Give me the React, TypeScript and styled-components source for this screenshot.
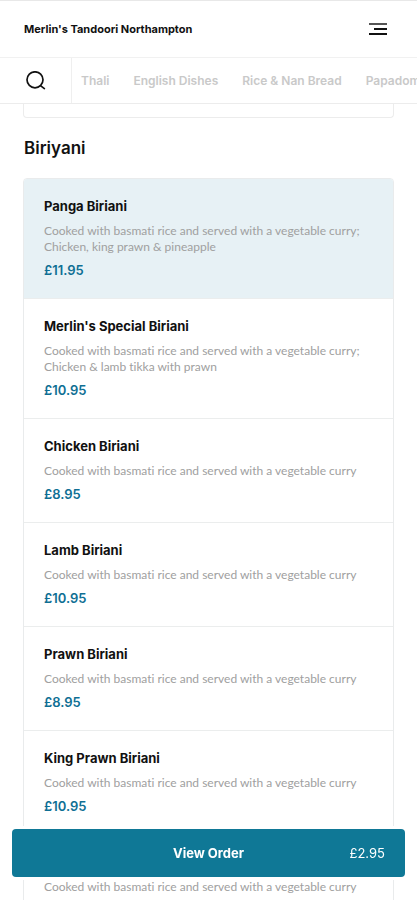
import React from "react";
import styled, { createGlobalStyle } from "styled-components";

const GlobalStyle = createGlobalStyle`
  *, *::before, *::after { box-sizing: border-box; }
  body {
    margin: 0;
    background: #fff;
    color: #111;
    font-family: Inter, "Open Sans", sans-serif;
  }
  h1, h2, h3, p { margin: 0; }
  button { font-family: inherit; cursor: pointer; }
`;

const Shell = styled.div`
  display: flex;
  flex-direction: column;
  height: 100vh;
  overflow: hidden;
  border-top: 1px solid #e8e8e8;
`;

const Header = styled.header`
  display: flex;
  flex: none;
  align-items: center;
  justify-content: space-between;
  height: 57px;
  padding: 0 23px 0 24px;
  border-bottom: 1px solid #f1f1f1;
`;

const Brand = styled.h1`
  font-size: 11px;
  line-height: 16px;
  font-weight: 700;
`;

const IconButton = styled.button`
  display: flex;
  align-items: center;
  justify-content: center;
  padding: 0;
  border: 0;
  background: none;
  color: #111;
`;

const MenuButton = styled(IconButton)`
  width: 32px;
  height: 32px;
`;

const CategoryBar = styled.div`
  display: flex;
  flex: none;
  height: 46px;
  border-bottom: 1px solid #ececec;
`;

const SearchButton = styled(IconButton)`
  flex: none;
  width: 72px;
  border-right: 1px solid #efefef;
`;

const Categories = styled.nav`
  display: flex;
  flex: 1;
  align-items: center;
  gap: 24px;
  min-width: 0;
  padding-left: 9px;
  overflow: hidden;
`;

const CategoryLink = styled.a`
  flex: none;
  color: #c9c9c9;
  font-size: 12px;
  line-height: 16px;
  font-weight: 600;
  text-decoration: none;
  white-space: nowrap;
`;

const Content = styled.main`
  flex: 1;
  min-height: 0;
  padding: 0 23px;
  overflow: hidden;
`;

const PreviousSection = styled.div`
  height: 14px;
  border: 1px solid #ececec;
  border-top: 0;
  border-radius: 0 0 4px 4px;
`;

const SectionTitle = styled.h2`
  padding: 18px 1px;
  font-size: 17px;
  line-height: 24px;
  font-weight: 600;
`;

const DishList = styled.ul`
  margin: 0;
  padding: 0;
  list-style: none;
  border: 1px solid #e9ebec;
  border-radius: 4px;
  overflow: hidden;
`;

const Dish = styled.li<{ $selected?: boolean }>`
  padding: 16px 20px 17px;
  border-bottom: 1px solid #ebeded;
  background: ${({ $selected }) => ($selected ? "#e7f1f5" : "#fff")};
`;

const DishName = styled.h3`
  font-size: 13px;
  line-height: 22px;
  font-weight: 700;
`;

const Description = styled.p`
  margin: 6px 0 5px;
  color: #a0a0a0;
  font-family: Lato, Inter, sans-serif;
  font-size: 12px;
  line-height: 16px;
  font-weight: 400;
  font-variant-ligatures: none;
  white-space: pre-line;
`;

const Price = styled.p`
  color: #0f6f94;
  font-size: 13px;
  line-height: 21px;
  font-weight: 600;
`;

const OrderButton = styled.button`
  position: fixed;
  right: 12px;
  bottom: 23px;
  left: 12px;
  display: grid;
  grid-template-columns: 1fr auto 1fr;
  align-items: center;
  height: 48px;
  padding: 0 20px;
  border: 0;
  border-radius: 4px;
  background: #0f7896;
  box-shadow: 0 0 0 3px #fff;
  color: #fff;
  font-size: 13px;
  line-height: 20px;
`;

const OrderLabel = styled.span`
  grid-column: 2;
  font-weight: 700;
`;

const OrderTotal = styled.span`
  justify-self: end;
  font-weight: 400;
`;

const categories = ["Thali", "English Dishes", "Rice & Nan Bread", "Papadoms"];

const base = "Cooked with basmati rice and served with a vegetable curry";

const dishes = [
  { name: "Panga Biriani", text: `${base};\nChicken, king prawn & pineapple`, price: "£11.95", selected: true },
  { name: "Merlin's Special Biriani", text: `${base};\nChicken & lamb tikka with prawn`, price: "£10.95" },
  { name: "Chicken Biriani", text: base, price: "£8.95" },
  { name: "Lamb Biriani", text: base, price: "£10.95" },
  { name: "Prawn Biriani", text: base, price: "£8.95" },
  { name: "King Prawn Biriani", text: base, price: "£10.95" },
  { name: "Vegetable Biriani", text: base, price: "£8.95" },
];

const MenuIcon = () => (
  <svg width="18" height="14" viewBox="0 0 18 14" fill="none" stroke="currentColor" strokeWidth="2" aria-hidden="true">
    <path d="M0 2H18" stroke="#555" />
    <path d="M5 7H18M0 12H18" />
  </svg>
);

const SearchIcon = () => (
  <svg width="20" height="20" viewBox="0 0 20 20" fill="none" stroke="currentColor" strokeWidth="1.7" strokeLinecap="round" aria-hidden="true">
    <circle cx="9" cy="8.8" r="8" />
    <path d="M14.8 14.8L18.4 17.6" />
  </svg>
);

export default function App() {
  return (
    <>
      <GlobalStyle />
      <Shell>
        <Header>
          <Brand>Merlin's Tandoori Northampton</Brand>
          <MenuButton type="button" aria-label="Open menu">
            <MenuIcon />
          </MenuButton>
        </Header>
        <CategoryBar>
          <SearchButton type="button" aria-label="Search dishes">
            <SearchIcon />
          </SearchButton>
          <Categories aria-label="Categories">
            {categories.map((name) => (
              <CategoryLink key={name} href="#">
                {name}
              </CategoryLink>
            ))}
          </Categories>
        </CategoryBar>
        <Content>
          <PreviousSection />
          <SectionTitle>Biriyani</SectionTitle>
          <DishList>
            {dishes.map((dish) => (
              <Dish key={dish.name} $selected={dish.selected}>
                <DishName>{dish.name}</DishName>
                <Description>{dish.text}</Description>
                <Price>{dish.price}</Price>
              </Dish>
            ))}
          </DishList>
        </Content>
        <OrderButton type="button">
          <OrderLabel>View Order</OrderLabel>
          <OrderTotal>£2.95</OrderTotal>
        </OrderButton>
      </Shell>
    </>
  );
}
